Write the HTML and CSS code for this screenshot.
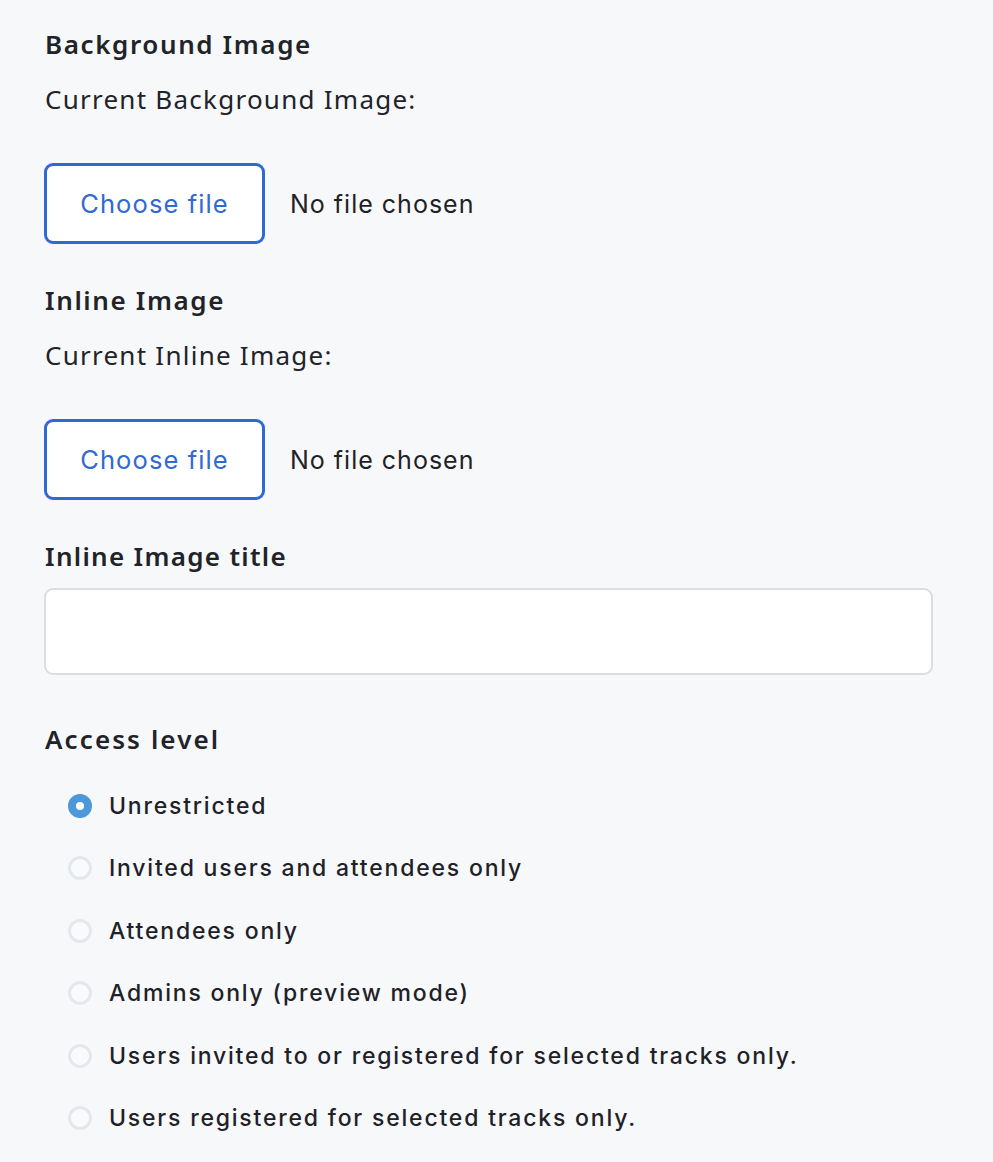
FILE: index.html
```html
<!DOCTYPE html>
<html>
<head>
<meta charset="utf-8">
<link rel="stylesheet" href="styles.css">
</head>
<body>
<div class="form">
  <section class="field">
    <h3 class="heading">Background Image</h3>
    <p class="current">Current Background Image:</p>
    <div class="file-row">
      <span class="file-btn">Choose file</span>
      <span class="file-status">No file chosen</span>
    </div>
  </section>
  <section class="field">
    <h3 class="heading">Inline Image</h3>
    <p class="current">Current Inline Image:</p>
    <div class="file-row">
      <span class="file-btn">Choose file</span>
      <span class="file-status">No file chosen</span>
    </div>
  </section>
  <section class="field">
    <h3 class="heading title-label">Inline Image title</h3>
    <div class="text-input"></div>
  </section>
  <section class="field access">
    <h3 class="heading access-label">Access level</h3>
    <ul class="radios">
      <li class="radio-item"><span class="radio checked"></span><span class="radio-label">Unrestricted</span></li>
      <li class="radio-item"><span class="radio"></span><span class="radio-label">Invited users and attendees only</span></li>
      <li class="radio-item"><span class="radio"></span><span class="radio-label">Attendees only</span></li>
      <li class="radio-item"><span class="radio"></span><span class="radio-label">Admins only (preview mode)</span></li>
      <li class="radio-item"><span class="radio"></span><span class="radio-label">Users invited to or registered for selected tracks only.</span></li>
      <li class="radio-item"><span class="radio"></span><span class="radio-label">Users registered for selected tracks only.</span></li>
    </ul>
  </section>
</div>
</body>
</html>
```
FILE: styles.css
```css
html, body {
  margin: 0;
  padding: 0;
  background: #f7f8fa;
}
body {
  font-family: "Noto Sans", sans-serif;
  color: #212329;
}
.form {
  padding: 26px 60px 0 44px;
  display: flex;
  flex-direction: column;
}
.heading {
  margin: 0;
  font-size: 26px;
  font-weight: 600;
  line-height: 36px;
  letter-spacing: 1.6px;
  padding-left: 1px;
}
.title-label {
  letter-spacing: 1.3px;
}
.access-label {
  letter-spacing: 2.1px;
}
.current {
  margin: 19px 0 0 1px;
  font-size: 26px;
  font-weight: 400;
  line-height: 36px;
  letter-spacing: 1.25px;
}
.file-row {
  margin-top: 46px;
  display: flex;
  align-items: center;
  gap: 25px;
  height: 81px;
  margin-bottom: 38px;
}
.file-btn {
  box-sizing: border-box;
  width: 221px;
  height: 81px;
  border: 3px solid #2f69d3;
  border-radius: 9px;
  background: #ffffff;
  color: #2f69d3;
  display: flex;
  align-items: center;
  justify-content: center;
  font-family: Inter, sans-serif;
  font-size: 25.5px;
  letter-spacing: 1.1px;
  padding-bottom: 1px;
}
.file-status {
  font-family: Inter, sans-serif;
  font-size: 25px;
  letter-spacing: 1px;
  color: #1f2125;
}
.text-input {
  margin-top: 14px;
  box-sizing: border-box;
  width: 889px;
  height: 87px;
  background: #ffffff;
  border: 2px solid #dcdde0;
  border-radius: 9px;
}
.access {
  margin-top: 46px;
}
.radios {
  list-style: none;
  margin: 31px 0 0 0;
  padding: 0 0 0 24px;
  display: flex;
  flex-direction: column;
  gap: 26.4px;
}
.radio-item {
  display: flex;
  align-items: center;
  gap: 17px;
  height: 36px;
}
.radio {
  box-sizing: border-box;
  width: 24px;
  height: 24px;
  border-radius: 50%;
  border: 3px solid #e4e8ee;
  background: #f9fafb;
  flex: none;
}
.radio.checked {
  border: 8px solid #4c98d8;
  background: #ffffff;
}
.radio-label {
  font-family: Inter, sans-serif;
  font-size: 23px;
  font-weight: 500;
  letter-spacing: 1.8px;
  color: #1f2128;
}
```
